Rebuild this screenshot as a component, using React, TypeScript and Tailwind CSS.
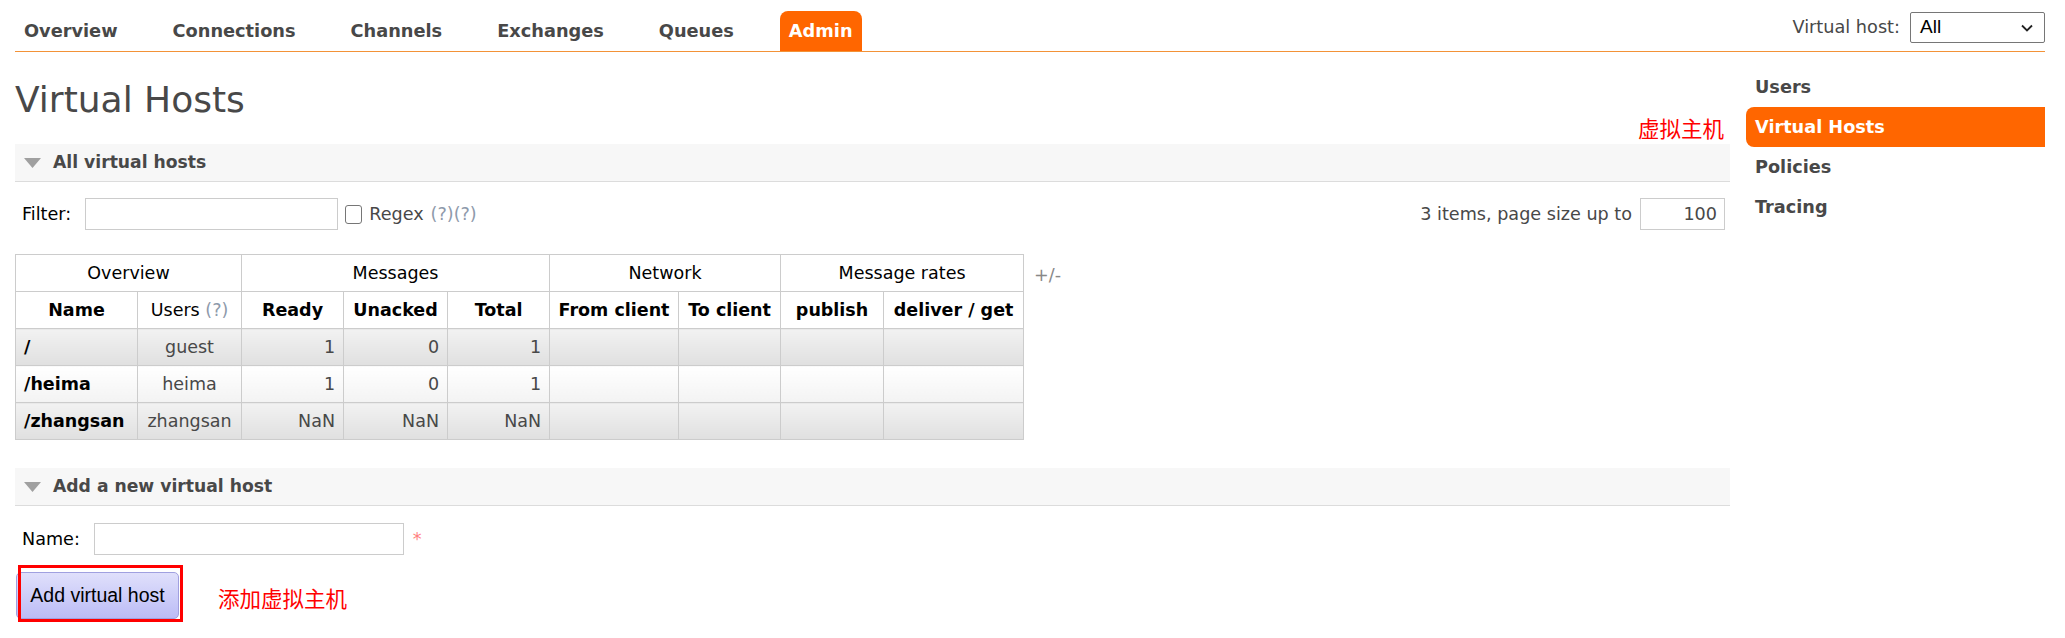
import React from 'react';

const navItems = ['Overview', 'Connections', 'Channels', 'Exchanges', 'Queues', 'Admin'];
const sideItems = ['Users', 'Virtual Hosts', 'Policies', 'Tracing'];

const rows = [
  { name: '/', users: 'guest', ready: '1', unacked: '0', total: '1' },
  { name: '/heima', users: 'heima', ready: '1', unacked: '0', total: '1' },
  { name: '/zhangsan', users: 'zhangsan', ready: 'NaN', unacked: 'NaN', total: 'NaN' },
];

function Triangle() {
  return (
    <svg width="17" height="10" viewBox="0 0 17 10" className="shrink-0">
      <polygon points="0,0 17,0 8.5,10" fill="#a0a0a0" />
    </svg>
  );
}

function SectionHeader({ title }: { title: string }) {
  return (
    <div className="flex h-[38px] items-center gap-[12px] border-b border-[#dcdcdc] bg-[#f7f7f7] pl-[9px]">
      <Triangle />
      <span className="text-[17.2px] font-bold text-[#484848]">{title}</span>
    </div>
  );
}

export default function App() {
  const cell = 'border border-[#cccccc] h-[37px] px-[8px]';
  const oddRow = 'bg-linear-to-b from-[#f2f2f2] to-[#e0e0e0]';
  const evenRow = 'bg-linear-to-b from-[#ffffff] to-[#f3f3f3]';

  return (
    <div className="relative h-[638px] w-[2065px] bg-white font-['DejaVu_Sans',sans-serif] text-[17.6px] text-[#484848]">
      {/* top menu */}
      <div className="ml-[15px] mr-[20px] flex h-[52px] items-end justify-between border-b border-[#f39237]">
        <div className="flex items-end gap-[37px]">
          {navItems.map((item) =>
            item === 'Admin' ? (
              <span
                key={item}
                className="flex h-[40px] items-center rounded-t-[8px] bg-[#ff6600] px-[9px] text-[17.75px] font-bold text-white"
              >
                {item}
              </span>
            ) : (
              <span key={item} className="flex h-[40px] items-center px-[9px] text-[17.75px] font-bold text-[#484848]">
                {item}
              </span>
            )
          )}
        </div>
        <div className="mb-[8px] flex items-center gap-[10px]">
          <span className="text-[17.7px] text-[#484848]">Virtual host:</span>
          <div className="flex h-[31px] w-[135px] items-center justify-between rounded-[2px] border border-[#767676] pl-[9px] pr-[11px] font-['Liberation_Sans',sans-serif] text-[19px] text-black">
            <span>All</span>
            <svg width="12" height="8" viewBox="0 0 12 8">
              <polyline points="1,1.5 6,6.5 11,1.5" fill="none" stroke="#222" strokeWidth="1.8" />
            </svg>
          </div>
        </div>
      </div>

      <div className="flex px-[15px]">
        {/* main column */}
        <div className="w-[1715px]">
          <h1 className="mt-[27px] text-[36px] font-normal leading-[42px] text-[#484848]">Virtual Hosts</h1>

          <div className="mt-[23px]">
            <SectionHeader title="All virtual hosts" />
            <div className="mt-[16px] flex h-[32px] items-center justify-between">
              <div className="flex items-center pl-[7px]">
                <span className="text-black">Filter:</span>
                <div className="ml-[14px] h-[32px] w-[253px] border border-[#cccccc] bg-white" />
                <span className="ml-[7px] h-[19px] w-[17px] rounded-[3px] border border-[#767676] bg-white" />
                <span className="ml-[7px] text-[#484848]">Regex</span>
                <span className="ml-[7px] text-[#8e9aab]">(?)(?)</span>
              </div>
              <div className="mr-[5px] flex items-center">
                <span className="text-[#484848]">3 items, page size up to</span>
                <div className="ml-[8px] flex h-[32px] w-[85px] items-center justify-end border border-[#cccccc] pr-[7px] text-[#484848]">
                  100
                </div>
              </div>
            </div>

            <div className="mt-[24px] flex items-start">
              <table className="w-[1008px] table-fixed border-collapse text-[17.5px]">
                <colgroup>
                  <col className="w-[122px]" />
                  <col className="w-[104px]" />
                  <col className="w-[102px]" />
                  <col className="w-[104px]" />
                  <col className="w-[102px]" />
                  <col className="w-[129px]" />
                  <col className="w-[102px]" />
                  <col className="w-[103px]" />
                  <col className="w-[140px]" />
                </colgroup>
                <thead>
                  <tr className="text-black">
                    <th colSpan={2} className={`${cell} font-normal`}>Overview</th>
                    <th colSpan={3} className={`${cell} font-normal`}>Messages</th>
                    <th colSpan={2} className={`${cell} font-normal`}>Network</th>
                    <th colSpan={2} className={`${cell} font-normal`}>Message rates</th>
                  </tr>
                  <tr className="text-black">
                    <th className={`${cell} font-bold`}>Name</th>
                    <th className={`${cell} font-normal`}>
                      Users <span className="text-[#8e9aab]">(?)</span>
                    </th>
                    <th className={`${cell} font-bold`}>Ready</th>
                    <th className={`${cell} font-bold`}>Unacked</th>
                    <th className={`${cell} font-bold`}>Total</th>
                    <th className={`${cell} whitespace-nowrap px-[4px] font-bold`}>From client</th>
                    <th className={`${cell} whitespace-nowrap px-[4px] font-bold`}>To client</th>
                    <th className={`${cell} font-bold`}>publish</th>
                    <th className={`${cell} whitespace-nowrap px-[4px] font-bold`}>deliver / get</th>
                  </tr>
                </thead>
                <tbody>
                  {rows.map((r, i) => {
                    const bg = i % 2 === 0 ? oddRow : evenRow;
                    return (
                      <tr key={r.name}>
                        <td className={`${cell} ${bg} px-[6px] font-bold text-black`}>{r.name}</td>
                        <td className={`${cell} ${bg} px-[4px] text-center`}>{r.users}</td>
                        <td className={`${cell} ${bg} text-right`}>{r.ready}</td>
                        <td className={`${cell} ${bg} text-right`}>{r.unacked}</td>
                        <td className={`${cell} ${bg} text-right`}>{r.total}</td>
                        <td className={`${cell} ${bg}`} />
                        <td className={`${cell} ${bg}`} />
                        <td className={`${cell} ${bg}`} />
                        <td className={`${cell} ${bg}`} />
                      </tr>
                    );
                  })}
                </tbody>
              </table>
              <span className="ml-[10px] pt-[8px] text-[#888888]">+/-</span>
            </div>
          </div>

          <div className="mt-[28px]">
            <SectionHeader title="Add a new virtual host" />
            <div className="mt-[17px] flex h-[32px] items-center pl-[7px]">
              <span className="text-black">Name:</span>
              <div className="ml-[14px] h-[32px] w-[310px] border border-[#cccccc] bg-white" />
              <span className="ml-[9px] text-[#ff8080]">*</span>
            </div>
            <div className="relative mt-[17px] flex items-center">
              <button className="ml-[1px] h-[47px] w-[163px] rounded-[5px] border border-[#a0a0e0] bg-linear-to-b from-[#e0e0fb] to-[#bcbcf6] font-['Liberation_Sans',sans-serif] text-[19.5px] text-black">
                Add virtual host
              </button>
              <span className="ml-[39px] mt-[6px] font-['Noto_Sans_CJK_SC',sans-serif] text-[21.5px] text-[#ff0000]">
                添加虚拟主机
              </span>
              <div className="absolute left-[3px] top-[-7px] h-[57px] w-[165px] border-[3px] border-[#ff0000]" />
            </div>
          </div>
        </div>

        {/* right side menu */}
        <div className="ml-[16px] mt-[15px] w-[299px]">
          {sideItems.map((item) =>
            item === 'Virtual Hosts' ? (
              <div
                key={item}
                className="flex h-[40px] items-center rounded-l-[8px] bg-[#ff6600] pl-[9px] text-[17.7px] font-bold text-white"
              >
                {item}
              </div>
            ) : (
              <div key={item} className="flex h-[40px] items-center pl-[9px] text-[17.7px] font-bold text-[#484848]">
                {item}
              </div>
            )
          )}
        </div>
      </div>

      {/* annotation */}
      <span className="absolute left-[1638px] top-[112px] font-['Noto_Sans_CJK_SC',sans-serif] text-[21.5px] text-[#ff0000]">
        虚拟主机
      </span>
    </div>
  );
}
